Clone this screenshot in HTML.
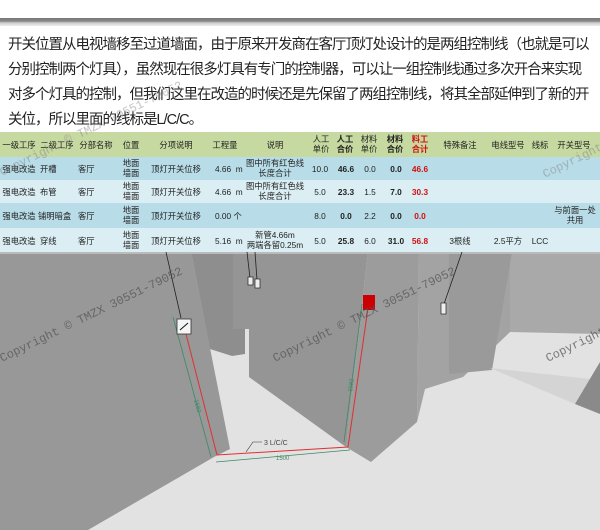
<!DOCTYPE html>
<html><head><meta charset="utf-8"><style>
*{margin:0;padding:0;box-sizing:border-box}
body{width:600px;height:530px;background:#fff;position:relative;overflow:hidden;font-family:"Liberation Sans","Noto Sans CJK SC",sans-serif}
.bar{position:absolute;left:0;top:18px;width:600px;height:8px;background:linear-gradient(#777 0,#888 40%,#ccc 60%,#eee 100%)}
.p{position:absolute;left:8px;top:33px;width:592px;font-size:14.5px;line-height:25px;color:#222;white-space:nowrap;letter-spacing:-1.0px}
.tb{position:absolute;left:0;top:132px;width:600px;height:120px;font-size:8.3px;color:#222}
.r{position:absolute;left:0;width:600px}
.c{position:absolute;line-height:10px;text-align:center;white-space:nowrap}
b{font-weight:bold}
.red{color:#d01010}
</style></head><body>
<div class="bar"></div>
<div class="p">开关位置从电视墙移至过道墙面，由于原来开发商在客厅顶灯处设计的是两组控制线（也就是可以<br>分别控制两个灯具），虽然现在很多灯具有专门的控制器，可以让一组控制线通过多次开合来实现<br>对多个灯具的控制，但我们这里在改造的时候还是先保留了两组控制线，将其全部延伸到了新的开<br>关位，所以里面的线标是L/C/C。</div>

<div class="tb">
<div class="r" style="top:0;height:25px;background:#c6d9a0">
<div class="c" style="left:0;width:38px;top:8px">一级工序</div>
<div class="c" style="left:38px;width:38px;top:8px">二级工序</div>
<div class="c" style="left:76px;width:40px;top:8px">分部名称</div>
<div class="c" style="left:116px;width:30px;top:8px">位置</div>
<div class="c" style="left:146px;width:60px;top:8px">分项说明</div>
<div class="c" style="left:205px;width:40px;top:8px">工程量</div>
<div class="c" style="left:245px;width:60px;top:8px">说明</div>
<div class="c" style="left:310px;width:22px;top:2px">人工<br>单价</div>
<div class="c" style="left:334px;width:22px;top:2px"><b>人工<br>合价</b></div>
<div class="c" style="left:358px;width:22px;top:2px">材料<br>单价</div>
<div class="c" style="left:384px;width:22px;top:2px"><b>材料<br>合价</b></div>
<div class="c red" style="left:409px;width:22px;top:2px"><b>料工<br>合计</b></div>
<div class="c" style="left:438px;width:44px;top:8px">特殊备注</div>
<div class="c" style="left:488px;width:40px;top:8px">电线型号</div>
<div class="c" style="left:528px;width:24px;top:8px">线标</div>
<div class="c" style="left:554px;width:40px;top:8px">开关型号</div>
</div>
<div class="r" style="top:25px;height:23px;background:#b8dde8">
<div class="c" style="left:0;width:38px;top:7px">强电改造</div><div class="c" style="left:40px;top:7px">开槽</div><div class="c" style="left:78px;top:7px">客厅</div>
<div class="c" style="left:116px;width:30px;top:1px">地面<br>墙面</div><div class="c" style="left:146px;width:60px;top:7px">顶灯开关位移</div>
<div class="c" style="left:215px;top:7px">4.66&nbsp; m</div><div class="c" style="left:245px;width:60px;top:1px">图中所有红色线<br>长度合计</div>
<div class="c" style="left:310px;width:20px;top:7px">10.0</div><div class="c" style="left:336px;width:20px;top:7px"><b>46.6</b></div><div class="c" style="left:360px;width:20px;top:7px">0.0</div><div class="c" style="left:386px;width:20px;top:7px"><b>0.0</b></div><div class="c red" style="left:410px;width:20px;top:7px"><b>46.6</b></div>
</div>
<div class="r" style="top:48px;height:23px;background:#dbeef3">
<div class="c" style="left:0;width:38px;top:7px">强电改造</div><div class="c" style="left:40px;top:7px">布管</div><div class="c" style="left:78px;top:7px">客厅</div>
<div class="c" style="left:116px;width:30px;top:1px">地面<br>墙面</div><div class="c" style="left:146px;width:60px;top:7px">顶灯开关位移</div>
<div class="c" style="left:215px;top:7px">4.66&nbsp; m</div><div class="c" style="left:245px;width:60px;top:1px">图中所有红色线<br>长度合计</div>
<div class="c" style="left:310px;width:20px;top:7px">5.0</div><div class="c" style="left:336px;width:20px;top:7px"><b>23.3</b></div><div class="c" style="left:360px;width:20px;top:7px">1.5</div><div class="c" style="left:386px;width:20px;top:7px"><b>7.0</b></div><div class="c red" style="left:410px;width:20px;top:7px"><b>30.3</b></div>
</div>
<div class="r" style="top:71px;height:25px;background:#b8dde8">
<div class="c" style="left:0;width:38px;top:8px">强电改造</div><div class="c" style="left:38px;top:8px">铺明暗盒</div><div class="c" style="left:78px;top:8px">客厅</div>
<div class="c" style="left:116px;width:30px;top:2px">地面<br>墙面</div><div class="c" style="left:146px;width:60px;top:8px">顶灯开关位移</div>
<div class="c" style="left:215px;top:8px">0.00 个</div>
<div class="c" style="left:310px;width:20px;top:8px">8.0</div><div class="c" style="left:336px;width:20px;top:8px"><b>0.0</b></div><div class="c" style="left:360px;width:20px;top:8px">2.2</div><div class="c" style="left:386px;width:20px;top:8px"><b>0.0</b></div><div class="c red" style="left:410px;width:20px;top:8px"><b>0.0</b></div>
<div class="c" style="left:554px;width:42px;top:2px">与前面一处<br>共用</div>
</div>
<div class="r" style="top:96px;height:24px;background:#dbeef3">
<div class="c" style="left:0;width:38px;top:8px">强电改造</div><div class="c" style="left:40px;top:8px">穿线</div><div class="c" style="left:78px;top:8px">客厅</div>
<div class="c" style="left:116px;width:30px;top:2px">地面<br>墙面</div><div class="c" style="left:146px;width:60px;top:8px">顶灯开关位移</div>
<div class="c" style="left:215px;top:8px">5.16&nbsp; m</div><div class="c" style="left:245px;width:60px;top:2px">新管4.66m<br>两端各留0.25m</div>
<div class="c" style="left:310px;width:20px;top:8px">5.0</div><div class="c" style="left:336px;width:20px;top:8px"><b>25.8</b></div><div class="c" style="left:360px;width:20px;top:8px">6.0</div><div class="c" style="left:386px;width:20px;top:8px"><b>31.0</b></div><div class="c red" style="left:410px;width:20px;top:8px"><b>56.8</b></div>
<div class="c" style="left:438px;width:44px;top:8px">3根线</div><div class="c" style="left:488px;width:40px;top:8px">2.5平方</div><div class="c" style="left:528px;width:24px;top:8px">LCC</div>
</div>
</div>

<svg style="position:absolute;left:0;top:252px" width="600" height="278" viewBox="0 0 600 278">
<rect width="600" height="278" fill="#e2e2e2"/>
<polygon points="419,0 600,0 600,80 510,80 463,125 425,137 417,170" fill="#a3a3a3"/>
<polygon points="510,0 600,0 600,82 510,80" fill="#a9a9a9"/>
<polygon points="449,0 512,0 492,118 449,122" fill="#9a9a9a"/>
<polygon points="490,116 600,128 600,150 575,152" fill="#d4d4d4"/>
<polygon points="575,152 600,110 600,162" fill="#8a8a8a"/>
<polygon points="191,0 245,0 245,102 232,104 210,97" fill="#8e8e8e"/>
<polygon points="233,0 368,0 346,195 249,125 249,77 233,77" fill="#959595"/>
<polygon points="368,0 419,0 417,170 371,210 346,195" fill="#9c9c9c"/>
<polygon points="0,0 191,0 230,197 214,205 88,278 0,278" fill="#989898"/>
<line x1="0" y1="1" x2="600" y2="1" stroke="#bbb" stroke-width="2"/>
<g stroke="#222" stroke-width="0.8" fill="none">
<line x1="166" y1="0" x2="181" y2="66"/><line x1="247" y1="0" x2="250" y2="26"/><line x1="255" y1="0" x2="257" y2="28"/><line x1="462" y1="0" x2="444" y2="52"/>
</g>
<rect x="248" y="25" width="5" height="8" fill="#eee" stroke="#222" stroke-width="0.7"/>
<rect x="255" y="27" width="5" height="9" fill="#eee" stroke="#222" stroke-width="0.7"/>
<rect x="441" y="51" width="5" height="11" fill="#eee" stroke="#222" stroke-width="0.7"/>
<g fill="none" stroke="#3b8a63" stroke-width="0.8">
<polyline points="173,65 211,205"/><polyline points="216,210 350,198"/><polyline points="344,190 362,52"/>
</g>
<g fill="none" stroke="#e03030" stroke-width="1">
<polyline points="186,82 217,203 348,195 368,56"/>
</g>
<rect x="177" y="67" width="14" height="15" fill="#f4f4f4" stroke="#333" stroke-width="0.8"/>
<line x1="180" y1="78" x2="188" y2="71" stroke="#111" stroke-width="1"/>
<rect x="363" y="43" width="12" height="15" fill="#cc0000"/>
<g font-family="Liberation Sans,sans-serif" font-size="6" fill="#3b8a63">
<text transform="translate(194,148) rotate(75)">1582</text>
<text transform="translate(352,140) rotate(-82)">1582</text>
<text x="276" y="208">1500</text>
</g>
<polyline points="246,200 253,190 262,190" fill="none" stroke="#333" stroke-width="0.6"/>
<text x="264" y="193" font-family="Liberation Sans,sans-serif" font-size="7" fill="#444">3 L/C/C</text>
<g font-family="Liberation Mono,monospace" font-size="12" fill="#555" opacity="0.75">
<text transform="translate(2,110) rotate(-26)">Copyright © TMZX 30551-79052</text>
<text transform="translate(275,110) rotate(-26)">Copyright © TMZX 30551-79052</text>
<text transform="translate(548,110) rotate(-26)">Copyright</text>
</g>
</svg>
<svg style="position:absolute;left:0;top:0" width="600" height="252">
<g font-family="Liberation Mono,monospace" font-size="12" fill="#777" opacity="0.45">
<text transform="translate(2,176) rotate(-26)">Copyright © TMZX 30551-79052</text>
<text transform="translate(545,178) rotate(-26)">Copyright</text>
</g>
</svg>
</body></html>
